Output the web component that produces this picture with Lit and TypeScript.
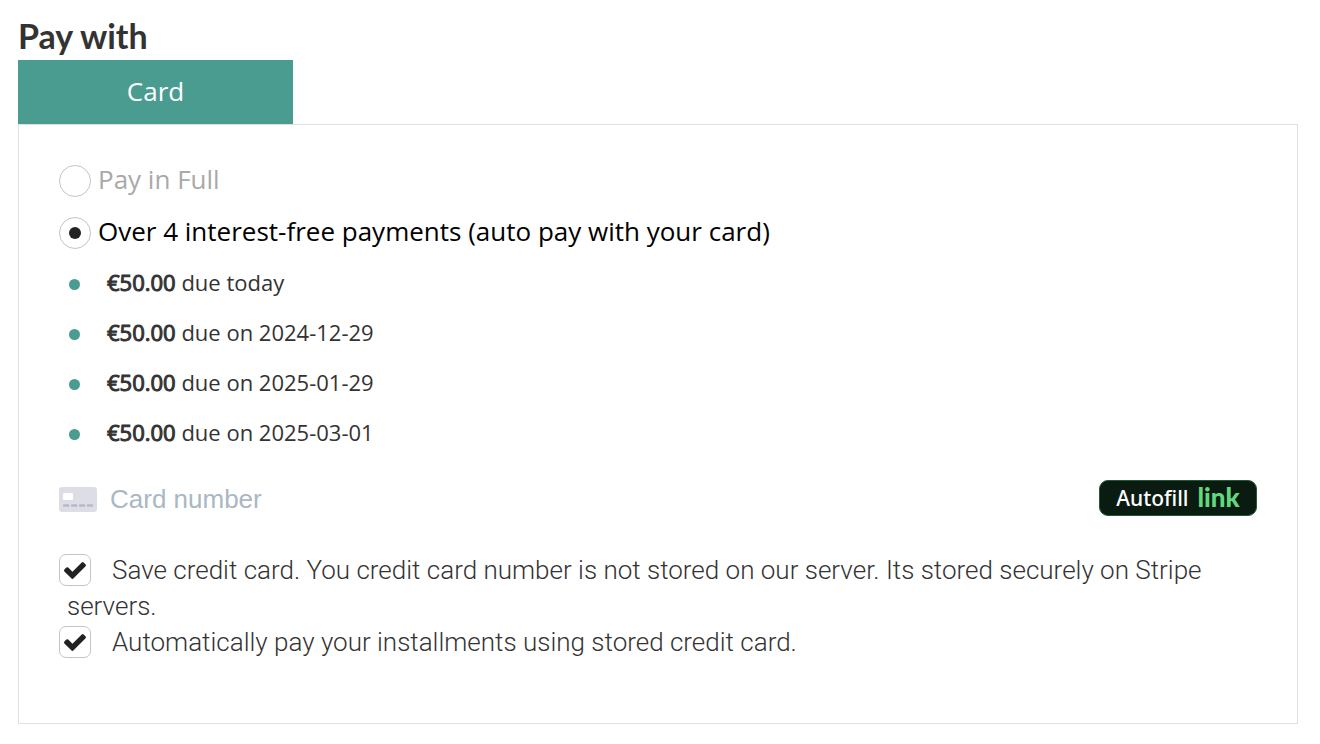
import { LitElement, html, css } from "lit";
import { customElement } from "lit/decorators.js";

interface Installment {
  amount: string;
  due: string;
}

@customElement("app-root")
export class AppRoot extends LitElement {
  static styles = css`
    :host {
      display: block;
      padding: 12px 22px 20px 18px;
      background: #fff;
      color: #333;
      font-family: "Open Sans", "Noto Sans", sans-serif;
      font-size: 26px;
    }
    * {
      box-sizing: border-box;
    }
    .title {
      margin: 0;
      font-family: Lato, "Open Sans", sans-serif;
      font-size: 34px;
      line-height: 48px;
      font-weight: 700;
    }
    .tab {
      display: block;
      width: 275px;
      height: 64px;
      padding: 0 0 2px;
      border: 0;
      background: #4b9c90;
      color: #fff;
      font: inherit;
    }
    .panel {
      border: 1px solid #e1e1e1;
      padding: 30px 40px 63px;
    }
    .option {
      display: flex;
      align-items: center;
      gap: 7px;
      height: 52px;
      color: #000;
    }
    .option span {
      padding-bottom: 4px;
    }
    .option.muted {
      color: #a9a9a9;
    }
    input[type="radio"],
    input[type="checkbox"] {
      appearance: none;
      flex: none;
      display: inline-grid;
      place-content: center;
      width: 32px;
      height: 32px;
      margin: 0;
      border: 1px solid #c4c4c4;
      background: #fff;
    }
    input[type="radio"] {
      border-radius: 50%;
    }
    input[type="radio"]:checked::before {
      content: "";
      width: 12px;
      height: 12px;
      border-radius: 50%;
      background: #222;
    }
    input[type="checkbox"] {
      border-radius: 7px;
    }
    .schedule {
      margin: 0;
      padding: 0;
      list-style: none;
      font-size: 22px;
    }
    .schedule li {
      display: flex;
      align-items: center;
      height: 50px;
      padding-left: 10px;
      gap: 27px;
    }
    .schedule li::before {
      content: "";
      width: 11px;
      height: 11px;
      border-radius: 50%;
      background: #4b9c90;
    }
    .schedule span {
      padding-bottom: 4px;
    }
    .amount {
      font-weight: 400;
      -webkit-text-stroke: 1px #333;
    }
    .card {
      display: flex;
      align-items: center;
      gap: 13px;
      margin-top: 21px;
    }
    .card-icon {
      flex: none;
      width: 38px;
      height: 28px;
    }
    .number {
      flex: 1;
      min-width: 0;
      height: 36px;
      padding: 2px 0 0;
      border: 0;
      outline: 0;
      background: none;
      font-family: "Liberation Sans", Arial, sans-serif;
      font-size: 26px;
      color: #333;
    }
    .number::placeholder {
      color: #aab7c4;
      opacity: 1;
    }
    .autofill {
      display: flex;
      align-items: center;
      justify-content: center;
      gap: 9px;
      width: 158px;
      height: 36px;
      padding: 0;
      border: 1px solid #1f5a30;
      border-radius: 9px;
      background: #0a1c12;
      color: #fff;
      font-family: "Noto Sans", sans-serif;
      font-size: 21px;
      font-weight: 500;
    }
    .link {
      padding-bottom: 2px;
      color: #62d77e;
      font-family: Lato, sans-serif;
      font-size: 26px;
      line-height: 32px;
      font-weight: 900;
    }
    .consents {
      margin-top: 36px;
      padding-left: 8px;
      font-family: Roboto, sans-serif;
      font-weight: 300;
      line-height: 36px;
    }
    .consent {
      display: block;
    }
    .box {
      display: inline-grid;
      vertical-align: top;
      height: 36px;
      padding: 2px 0;
      margin: 0 21px 0 -8px;
    }
    .box input,
    .box svg {
      grid-area: 1 / 1;
    }
    .box svg {
      place-self: center;
      width: 22px;
      height: 17px;
      pointer-events: none;
      visibility: hidden;
    }
    .box input:checked + svg {
      visibility: visible;
    }
  `;

  private installments: Installment[] = [
    { amount: "€50.00", due: "due today" },
    { amount: "€50.00", due: "due on 2024-12-29" },
    { amount: "€50.00", due: "due on 2025-01-29" },
    { amount: "€50.00", due: "due on 2025-03-01" },
  ];

  private consents = [
    "Save credit card. You credit card number is not stored on our server. Its stored securely on Stripe servers.",
    "Automatically pay your installments using stored credit card.",
  ];

  render() {
    return html`
      <h2 class="title">Pay with</h2>
      <button class="tab" type="button">Card</button>
      <section class="panel">
        <label class="option muted">
          <input type="radio" name="plan" /><span>Pay in Full</span>
        </label>
        <label class="option">
          <input type="radio" name="plan" checked />
          <span>Over 4 interest-free payments (auto pay with your card)</span>
        </label>
        <ul class="schedule">
          ${this.installments.map(
            (i) => html`<li><span><b class="amount">${i.amount}</b> ${i.due}</span></li>`
          )}
        </ul>
        <div class="card">
          <svg class="card-icon" viewBox="0 0 38 28" aria-hidden="true">
            <rect width="38" height="25" y="3" rx="3" fill="#dddee5" />
            <rect x="4" y="9" width="10" height="7" rx="1.5" fill="#fff" />
            <path d="M5.2 21.5h4M13.2 21.5h4M21.2 21.5h4M29 21.5h4" stroke="#b5b9c9" stroke-width="2.6" stroke-linecap="round" />
          </svg>
          <input class="number" type="text" inputmode="numeric" aria-label="Card number" placeholder="Card number" />
          <button class="autofill" type="button"><span>Autofill</span><span class="link">link</span></button>
        </div>
        <div class="consents">
          ${this.consents.map(
            (text) => html`<label class="consent"
              ><span class="box"
                ><input type="checkbox" checked /><svg viewBox="121 334 1550 1188" aria-hidden="true">
                  <path
                    fill="#222"
                    d="M1671 566q0 40-28 68l-724 724-136 136q-28 28-68 28t-68-28l-136-136-362-362q-28-28-28-68t28-68l136-136q28-28 68-28t68 28l294 295 656-657q28-28 68-28t68 28l136 136q28 28 28 68z"
                  />
                </svg></span
              >${text}</label
            >`
          )}
        </div>
      </section>
    `;
  }
}
